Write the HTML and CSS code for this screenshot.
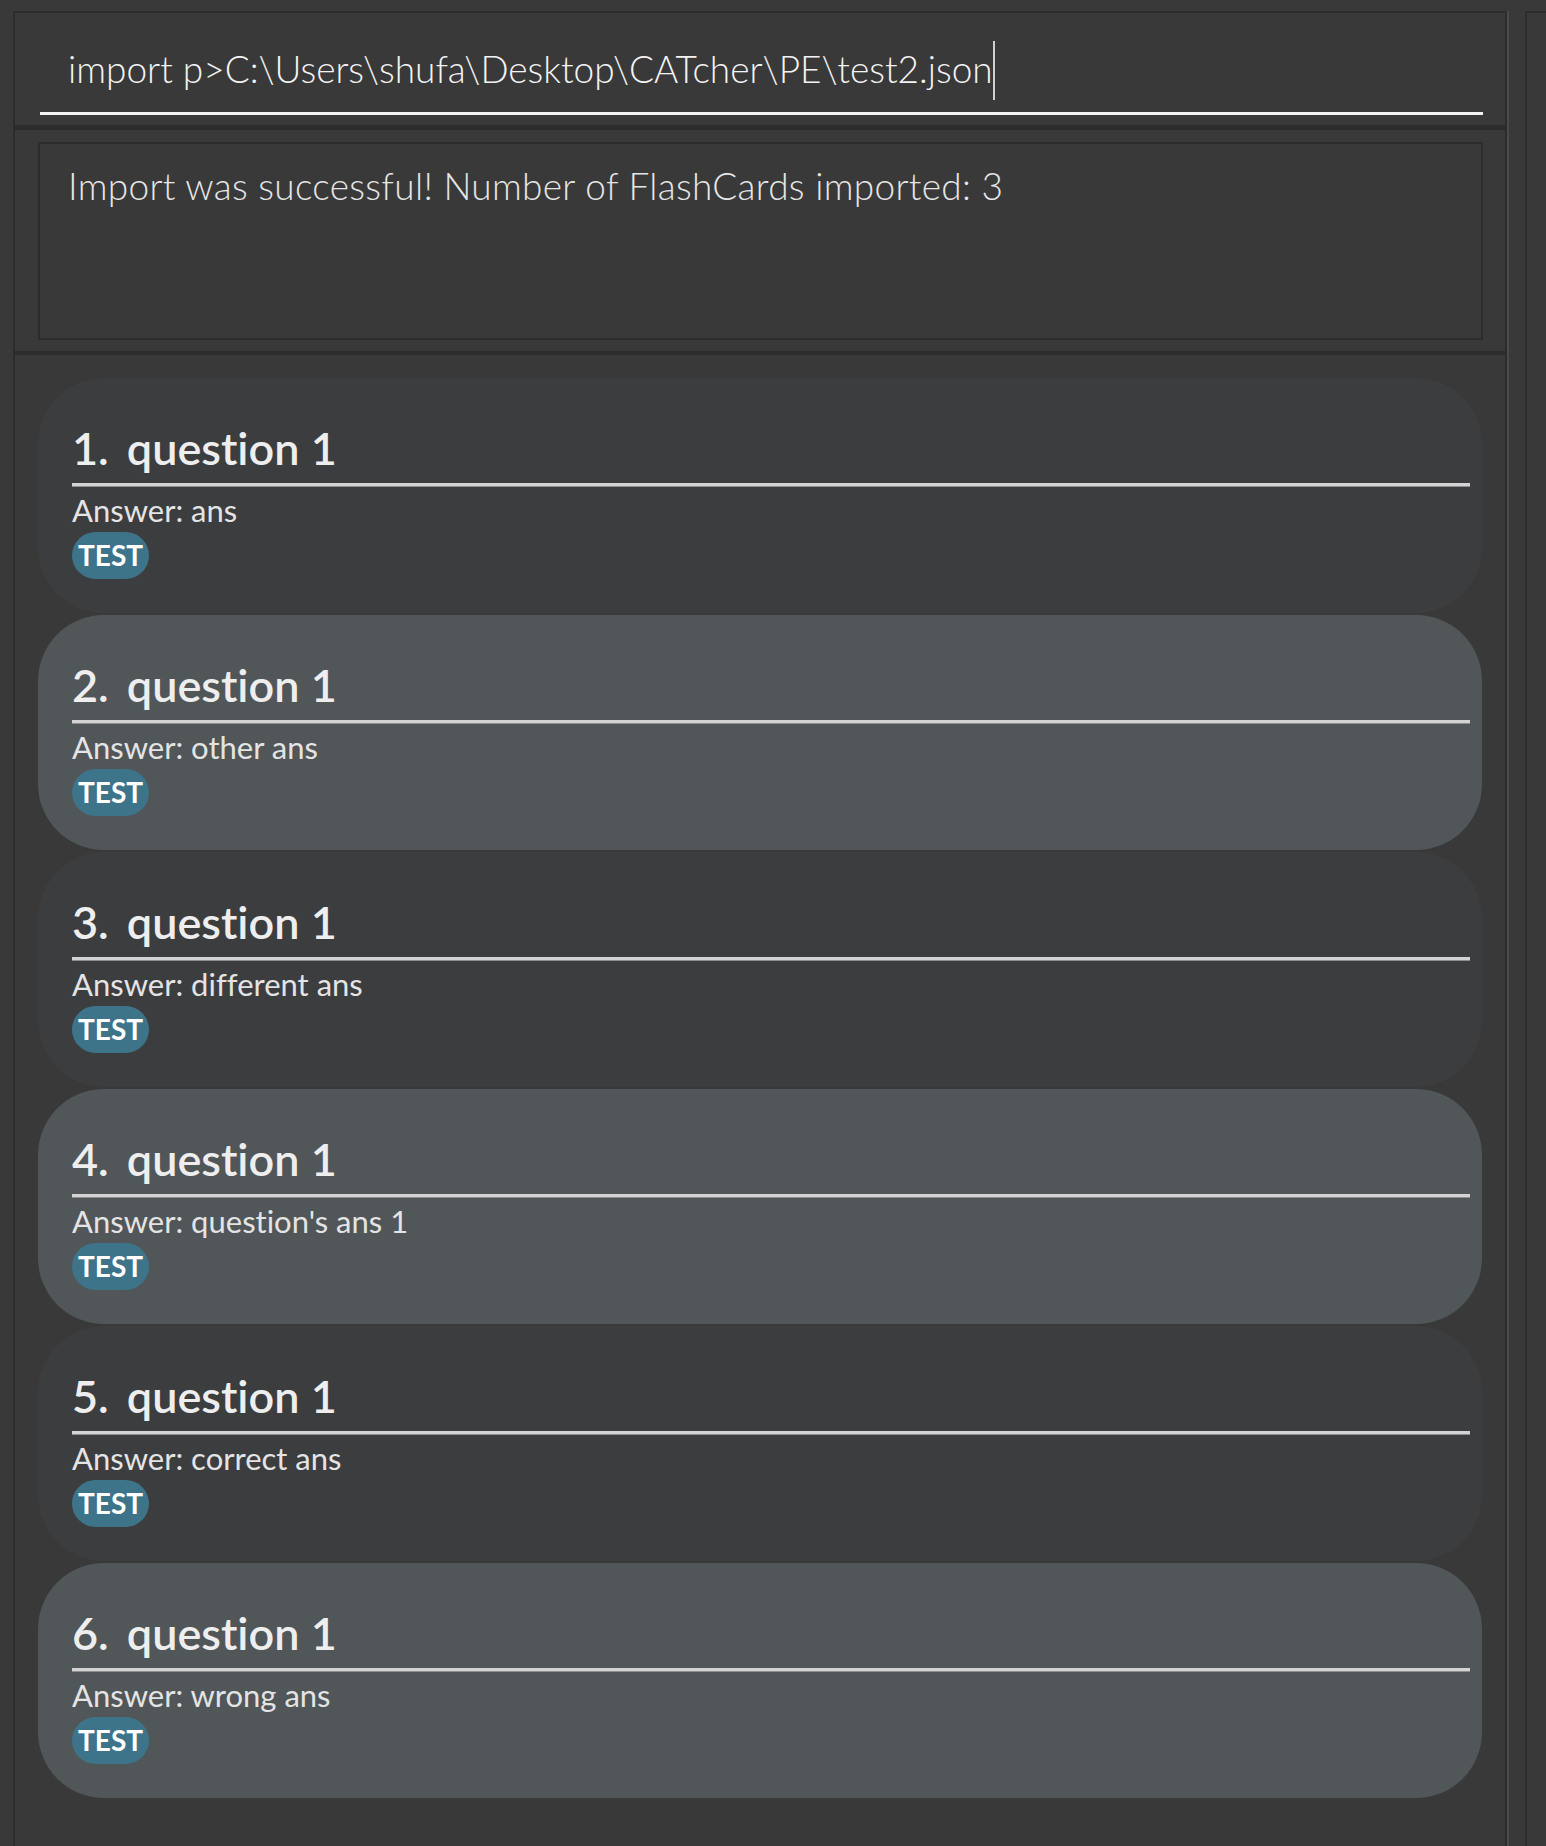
FILE: index.html
```html
<!DOCTYPE html>
<html>
<head>
<meta charset="utf-8">
<link rel="stylesheet" href="styles.css">
</head>
<body>
<div class="app">
  <div class="main">
    <div class="command">
      <div class="input"><span class="cmdtext">import p&gt;C:\Users\shufa\Desktop\CATcher\PE\test2.json</span></div>
    </div>
    <div class="band"></div>
    <div class="result">
      <div class="result-box">Import was successful! Number of FlashCards imported: 3</div>
    </div>
    <div class="band band-thin"></div>
    <div class="list">
      <div class="card odd">
        <div class="title"><span class="num">1.</span>question 1</div>
        <div class="rule"></div>
        <div class="answer">Answer: ans</div>
        <div class="tags"><span class="tag">TEST</span></div>
      </div>
      <div class="card even">
        <div class="title"><span class="num">2.</span>question 1</div>
        <div class="rule"></div>
        <div class="answer">Answer: other ans</div>
        <div class="tags"><span class="tag">TEST</span></div>
      </div>
      <div class="card odd">
        <div class="title"><span class="num">3.</span>question 1</div>
        <div class="rule"></div>
        <div class="answer">Answer: different ans</div>
        <div class="tags"><span class="tag">TEST</span></div>
      </div>
      <div class="card even">
        <div class="title"><span class="num">4.</span>question 1</div>
        <div class="rule"></div>
        <div class="answer">Answer: question's ans 1</div>
        <div class="tags"><span class="tag">TEST</span></div>
      </div>
      <div class="card odd">
        <div class="title"><span class="num">5.</span>question 1</div>
        <div class="rule"></div>
        <div class="answer">Answer: correct ans</div>
        <div class="tags"><span class="tag">TEST</span></div>
      </div>
      <div class="card even">
        <div class="title"><span class="num">6.</span>question 1</div>
        <div class="rule"></div>
        <div class="answer">Answer: wrong ans</div>
        <div class="tags"><span class="tag">TEST</span></div>
      </div>
    </div>
  </div>
  <div class="divider"></div>
  <div class="side"></div>
</div>
</body>
</html>
```

FILE: styles.css
```css
* { box-sizing: border-box; }

html, body {
  margin: 0;
  padding: 0;
  background: #393939;
  font-family: "Lato", "Open Sans", sans-serif;
  font-variant-ligatures: none;
  height: 1846px;
  overflow: hidden;
}

.app {
  display: flex;
  padding: 11px 0 0 13px;
  height: 1846px;
}

.main {
  width: 1494px;
  flex: none;
  border-top: 2px solid #2c2c2c;
  border-left: 2px solid #2c2c2c;
  border-right: 2px solid #2c2c2c;
  display: flex;
  flex-direction: column;
  height: 1835px;
}

.divider {
  width: 18px;
  flex: none;
  border-left: 2px solid #4a4a4a;
}

.side {
  flex: 1;
  border-top: 2px solid #2c2c2c;
  border-left: 2px solid #2c2c2c;
}

.command {
  padding: 34px 22px 10px 25px;
}

.input {
  padding: 0 0 21px 28px;
  border-bottom: 3px solid #f2f2f2;
  font-size: 37px;
  font-weight: 300;
  line-height: 44px;
  color: #f4f4f4;
  white-space: nowrap;
}

.cmdtext {
  border-right: 2px solid #d0d0d0;
  padding: 5px 0 9px;
}

.band {
  height: 5px;
  background: #2c2c2c;
}

.band-thin {
  height: 4px;
}

.result {
  padding: 12px 22px 11px 23px;
}

.result-box {
  height: 198px;
  border: 2px solid #2c2c2c;
  padding: 20px 0 0 28px;
  font-size: 37px;
  font-weight: 300;
  letter-spacing: 0.3px;
  line-height: 44px;
  color: #e6e6e6;
}

.list {
  padding: 23px 23px 0 23px;
  display: flex;
  flex-direction: column;
  gap: 2px;
}

.card {
  height: 235px;
  border-radius: 66px;
  padding: 42px 12px 0 34px;
}

.odd { background: #3c3d3f; }
.even { background: #515659; }

.title {
  font-size: 45px;
  font-weight: 600;
  line-height: 56px;
  color: #eeeeee;
  white-space: nowrap;
}

.num {
  margin-right: 18px;
}

.rule {
  margin-top: 7px;
  height: 4px;
  border-top: 3px solid #d3d3d3;
  border-bottom: 1px solid #8e8e8e;
}

.answer {
  margin-top: 5px;
  font-size: 31px;
  line-height: 36px;
  color: #e4e4e4;
}

.tags {
  margin-top: 4px;
  display: flex;
}

.tag {
  height: 47px;
  padding: 0 6px;
  border-radius: 24px;
  background: #3e7489;
  color: #ffffff;
  font-size: 28px;
  font-weight: 700;
  line-height: 47px;
}
```
